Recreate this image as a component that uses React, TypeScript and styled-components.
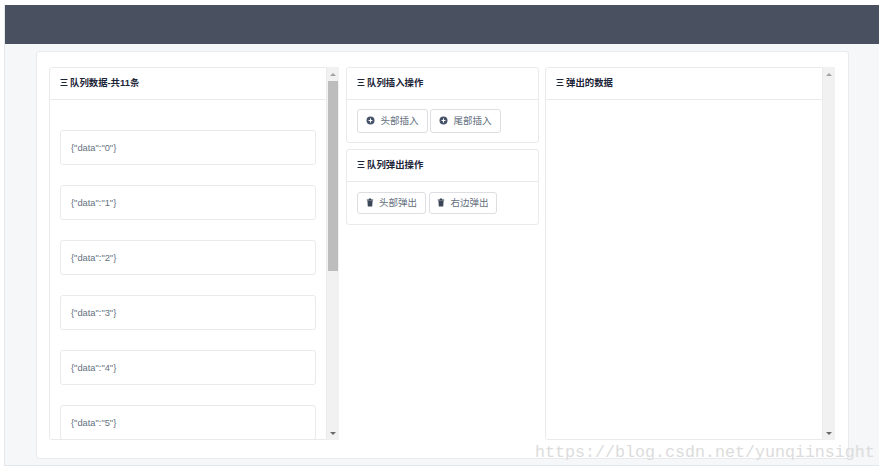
import styled, { createGlobalStyle } from "styled-components";

const GlobalStyle = createGlobalStyle`
  html, body {
    margin: 0;
    padding: 0;
    background: #fff;
    overflow: hidden;
  }
  body {
    font-family: "Liberation Sans", "Noto Sans CJK SC", sans-serif;
  }
`;

const queue = [0, 1, 2, 3, 4, 5];

function ListIcon() {
  return (
    <svg width="8" height="7" viewBox="0 0 8 7">
      <path d="M0.5 0.5h7M1.5 3.5h5M0.5 6.5h7" stroke="#1c2438" strokeWidth="1" fill="none" />
    </svg>
  );
}

function PlusIcon() {
  return (
    <svg width="9" height="9" viewBox="0 0 9 9">
      <circle cx="4.5" cy="4.5" r="4" fill="#47536a" />
      <path d="M4.5 2.4v4.2M2.6 4.5h3.8" stroke="#fff" strokeWidth="1" />
    </svg>
  );
}

function TrashIcon() {
  return (
    <svg width="8" height="9" viewBox="0 0 8 9">
      <path d="M0.8 1.6h6.4v0.8H0.8zM2.8 0.6h2.4v1H2.8zM1.4 2.8h5.2l-0.4 5.6H1.8z" fill="#3d4657" />
    </svg>
  );
}

function Scroller({ thumb }: { thumb?: number }) {
  return (
    <ScrollTrack>
      <ArrowBox>
        <ArrowUp />
      </ArrowBox>
      <ThumbArea>{thumb ? <Thumb $height={thumb} /> : null}</ThumbArea>
      <ArrowBox>
        <ArrowDown />
      </ArrowBox>
    </ScrollTrack>
  );
}

export default function App() {
  return (
    <>
      <GlobalStyle />
      <Shell>
        <Header />
        <Content>
          <Board>
            <ScrollColumn>
              <Panel>
                <PanelHead>
                  <ListIcon />
                  <span>队列数据-共11条</span>
                </PanelHead>
                <QueueList>
                  {queue.map((n) => (
                    <QueueItem key={n}>{`{"data":"${n}"}`}</QueueItem>
                  ))}
                </QueueList>
              </Panel>
              <Scroller thumb={190} />
            </ScrollColumn>

            <MiddleColumn>
              <ActionPanel>
                <PanelHead>
                  <ListIcon />
                  <span>队列插入操作</span>
                </PanelHead>
                <Actions $top={9} $bottom={9} $gap={2}>
                  <ActionButton $width={71} $height={24}>
                    <PlusIcon />
                    头部插入
                  </ActionButton>
                  <ActionButton $width={71} $height={24}>
                    <PlusIcon />
                    尾部插入
                  </ActionButton>
                </Actions>
              </ActionPanel>
              <ActionPanel>
                <PanelHead>
                  <ListIcon />
                  <span>队列弹出操作</span>
                </PanelHead>
                <Actions $top={10} $bottom={10} $gap={3}>
                  <ActionButton $width={69} $height={22}>
                    <TrashIcon />
                    头部弹出
                  </ActionButton>
                  <ActionButton $width={68} $height={22}>
                    <TrashIcon />
                    右边弹出
                  </ActionButton>
                </Actions>
              </ActionPanel>
            </MiddleColumn>

            <ScrollColumn>
              <Panel>
                <PanelHead>
                  <ListIcon />
                  <span>弹出的数据</span>
                </PanelHead>
              </Panel>
              <Scroller />
            </ScrollColumn>
          </Board>
        </Content>
      </Shell>
      <Watermark>https://blog.csdn.net/yunqiinsight</Watermark>
    </>
  );
}

const Shell = styled.div`
  box-sizing: border-box;
  width: 875px;
  height: 461px;
  margin: 5px 0 0 4px;
  background: #f5f7f9;
  border-left: 1px solid #e3e8ee;
  border-bottom: 1px solid #e3e8ee;
  display: flex;
  flex-direction: column;
`;

const Header = styled.div`
  height: 39px;
  flex: none;
  background: #495060;
`;

const Content = styled.div`
  flex: 1;
  padding: 7px 30px 6px 31px;
  display: flex;
  min-height: 0;
`;

const Board = styled.div`
  flex: 1;
  background: #fff;
  border: 1px solid #e9eaec;
  border-radius: 3px;
  padding: 15px 13px 18px 12px;
  display: flex;
  gap: 6px;
  min-height: 0;
`;

const ScrollColumn = styled.div`
  width: 290px;
  flex: none;
  display: flex;
  min-height: 0;
`;

const MiddleColumn = styled.div`
  width: 193px;
  flex: none;
  margin-left: 1px;
  display: flex;
  flex-direction: column;
  gap: 6px;
`;

const Panel = styled.div`
  flex: 1;
  min-width: 0;
  background: #fff;
  border: 1px solid #e9eaec;
  border-radius: 3px 0 0 3px;
  overflow: hidden;
`;

const ActionPanel = styled.div`
  background: #fff;
  border: 1px solid #e9eaec;
  border-radius: 3px;
`;

const PanelHead = styled.div`
  box-sizing: border-box;
  height: 32px;
  padding: 0 10px 3px;
  border-bottom: 1px solid #e9eaec;
  display: flex;
  align-items: center;
  gap: 2px;
  font-size: 9.4px;
  font-weight: 700;
  color: #1c2438;
`;

const QueueList = styled.div`
  padding: 30px 10px 0;
  display: flex;
  flex-direction: column;
  gap: 20px;
`;

const QueueItem = styled.div`
  box-sizing: border-box;
  height: 35px;
  flex: none;
  padding: 0 10px;
  border: 1px solid #e9eaec;
  border-radius: 3px;
  display: flex;
  align-items: center;
  font-size: 9.3px;
  color: #657180;
`;

const Actions = styled.div<{ $top: number; $bottom: number; $gap: number }>`
  padding: ${(p) => p.$top}px 10px ${(p) => p.$bottom}px;
  display: flex;
  gap: ${(p) => p.$gap}px;
`;

const ActionButton = styled.button<{ $width: number; $height: number }>`
  box-sizing: border-box;
  width: ${(p) => p.$width}px;
  height: ${(p) => p.$height}px;
  padding: 0 0 2px;
  background: #fff;
  border: 1px solid #dddee1;
  border-radius: 3px;
  display: flex;
  align-items: center;
  justify-content: center;
  gap: 5px;
  font-family: inherit;
  font-size: 9.5px;
  color: #657180;
`;

const ScrollTrack = styled.div`
  width: 12px;
  flex: none;
  background: #f1f1f1;
  display: flex;
  flex-direction: column;
`;

const ArrowBox = styled.div`
  height: 14px;
  flex: none;
  display: flex;
  align-items: center;
  justify-content: center;
`;

const ArrowUp = styled.div`
  width: 0;
  height: 0;
  border-left: 3px solid transparent;
  border-right: 3px solid transparent;
  border-bottom: 3px solid #a3a3a3;
`;

const ArrowDown = styled.div`
  width: 0;
  height: 0;
  border-left: 3px solid transparent;
  border-right: 3px solid transparent;
  border-top: 3px solid #6a6a6a;
`;

const ThumbArea = styled.div`
  flex: 1;
  min-height: 0;
`;

const Thumb = styled.div<{ $height: number }>`
  height: ${(p) => p.$height}px;
  margin: 0 1px;
  background: #bdbdbd;
`;

const Watermark = styled.div`
  position: absolute;
  left: 535px;
  top: 443px;
  font-family: "Liberation Mono", monospace;
  font-size: 16.67px;
  line-height: 20px;
  color: #dcdcdc;
  white-space: nowrap;
`;
